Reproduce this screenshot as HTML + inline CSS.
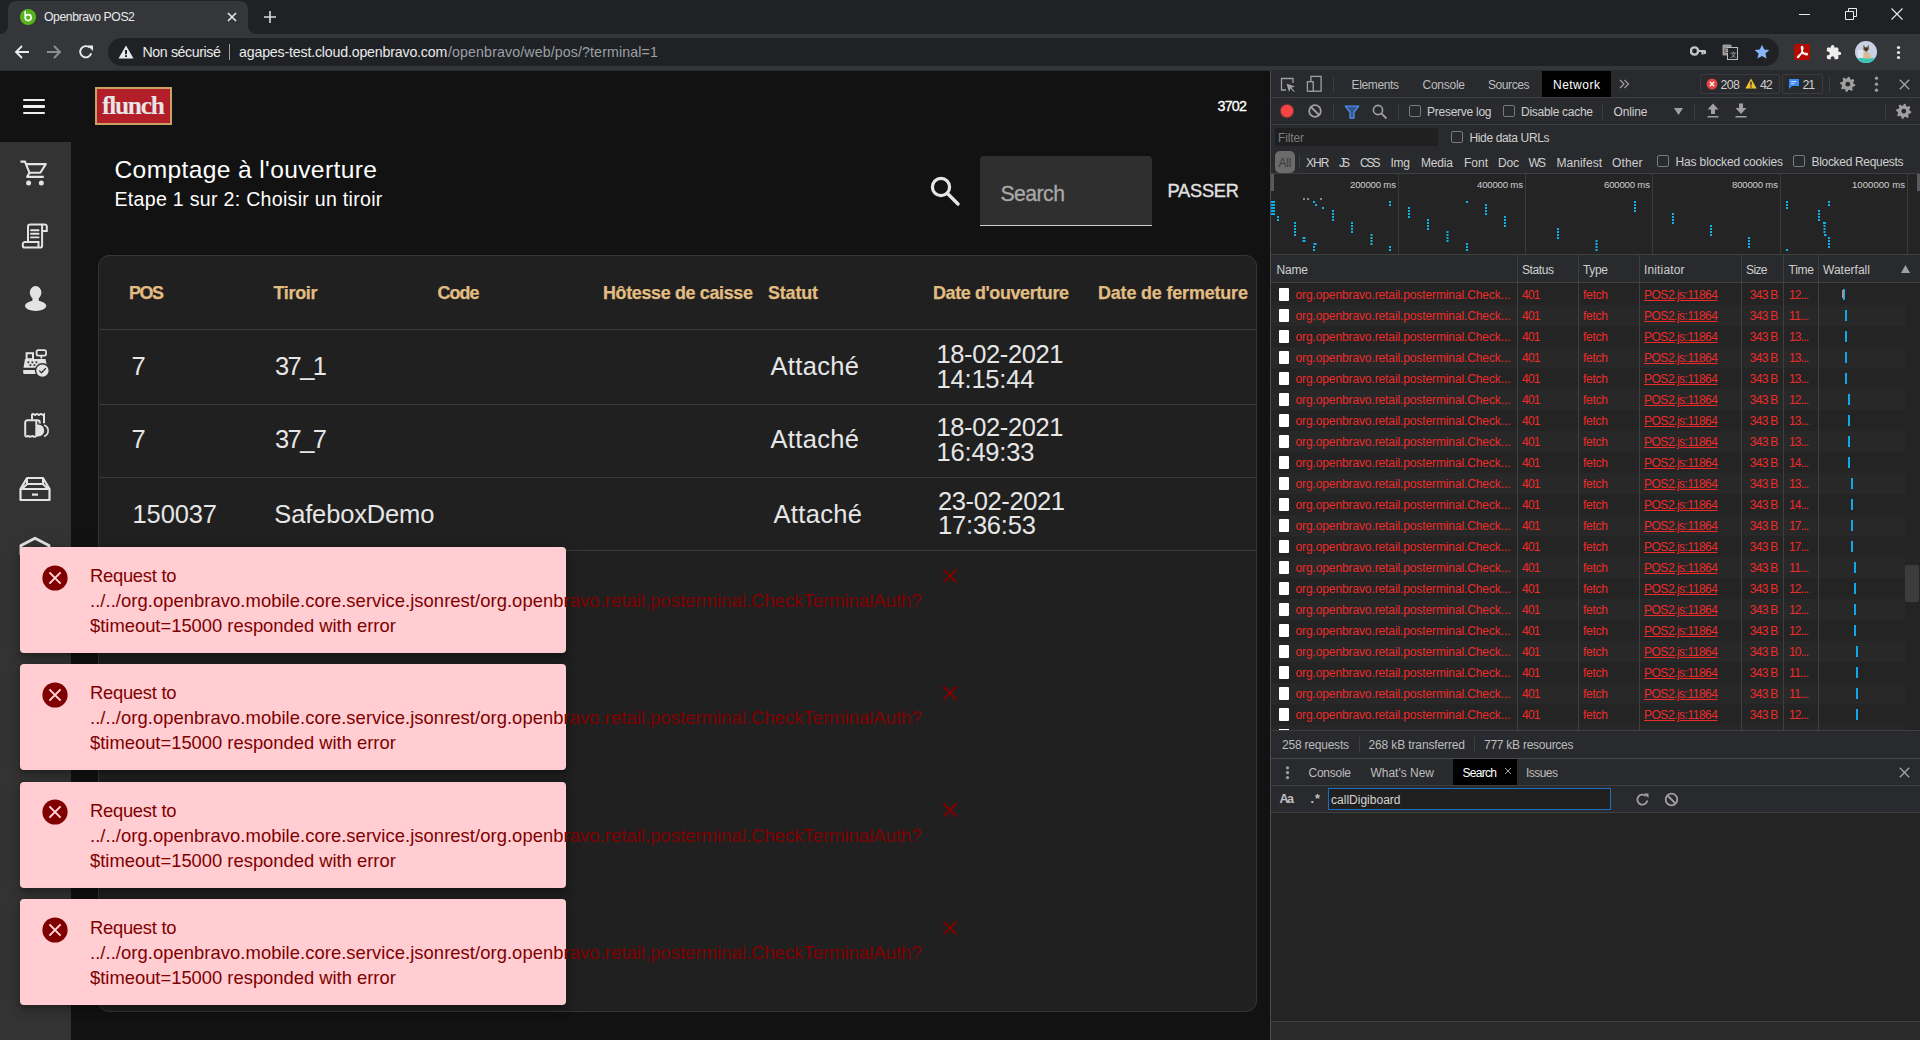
<!DOCTYPE html>
<html><head><meta charset="utf-8"><title>Openbravo POS2</title>
<style>
html,body{margin:0;padding:0;width:1920px;height:1040px;overflow:hidden;background:#202124;}
body{position:relative;font-family:"Liberation Sans",sans-serif;}
.r{position:absolute;display:block;}
.t{position:absolute;white-space:pre;}
</style></head><body>
<div class="r" style="left:0px;top:0px;width:1920px;height:35px;background:#35363a;"></div>
<div class="r" style="left:0px;top:0px;width:8px;height:34px;background:#202124;border-bottom-right-radius:8px;"></div>
<div class="r" style="left:248px;top:0px;width:1672px;height:34px;background:#202124;border-bottom-left-radius:8px;"></div>
<div class="r" style="left:8px;top:0px;width:240px;height:12px;background:#202124;"></div>
<div class="r" style="left:8px;top:1px;width:240px;height:34px;background:#35363a;border-radius:8px 8px 0 0;"></div>
<svg class="r" style="left:20px;top:9px;" width="16" height="16" viewBox="0 0 16 16"><circle cx="8" cy="8" r="8" fill="#56b41b"/><path d="M5.2 2.6 V8.6 A3 3 0 1 0 8.2 5.6 A3 3 0 0 0 5.6 7.2" fill="none" stroke="#fff" stroke-width="1.6" stroke-linecap="round"/></svg>
<div class="t " style="left:44.00px;top:11.17px;font-size:12.20px;line-height:12.20px;color:#e8eaed;letter-spacing:-0.409px;">Openbravo POS2</div>
<svg class="r" style="left:227px;top:12px;" width="10" height="10" viewBox="0 0 10 10"><path d="M1 1L9 9M9 1L1 9" stroke="#e8eaed" stroke-width="1.6"/></svg>
<svg class="r" style="left:264px;top:11px;" width="12" height="12" viewBox="0 0 12 12"><path d="M6 0V12M0 6H12" stroke="#dadce0" stroke-width="1.6"/></svg>
<svg class="r" style="left:1799px;top:13px;" width="12" height="3" viewBox="0 0 12 3"><path d="M0 1.5H11" stroke="#e8eaed" stroke-width="1"/></svg>
<svg class="r" style="left:1845px;top:8px;" width="12" height="12" viewBox="0 0 12 12"><path d="M0.5 3.5H8.5V11.5H0.5Z M3.5 3.5V0.5H11.5V8.5H8.5" fill="none" stroke="#e8eaed" stroke-width="1"/></svg>
<svg class="r" style="left:1891px;top:8px;" width="12" height="12" viewBox="0 0 12 12"><path d="M0.5 0.5L11.5 11.5M11.5 0.5L0.5 11.5" stroke="#e8eaed" stroke-width="1.1"/></svg>
<div class="r" style="left:0px;top:34px;width:1920px;height:37px;background:#35363a;"></div>
<div class="r" style="left:0px;top:70px;width:1920px;height:1px;background:#2a2b2e;"></div>
<svg class="r" style="left:14px;top:44px;" width="16" height="16" viewBox="0 0 16 16"><path d="M15 8H2.5M8 2L2 8L8 14" fill="none" stroke="#e8eaed" stroke-width="1.9"/></svg>
<svg class="r" style="left:46px;top:44px;" width="16" height="16" viewBox="0 0 16 16"><path d="M1 8H13.5M8 2L14 8L8 14" fill="none" stroke="#8d8e91" stroke-width="1.9"/></svg>
<svg class="r" style="left:78px;top:44px;" width="16" height="16" viewBox="0 0 16 16"><path d="M13.2 9.2A5.6 5.6 0 1 1 11.6 3.6" fill="none" stroke="#e8eaed" stroke-width="1.9"/><path d="M9.5 1.5H15V7Z" fill="#e8eaed"/></svg>
<div class="r" style="left:108px;top:38px;width:1671px;height:28px;background:#202124;border-radius:14px;"></div>
<svg class="r" style="left:118px;top:45px;" width="16" height="14" viewBox="0 0 16 14"><path d="M8 0.5L15.5 13.5H0.5Z" fill="#e8eaed"/><rect x="7" y="5" width="2" height="4.2" fill="#202124"/><rect x="7" y="10.2" width="2" height="1.8" fill="#202124"/></svg>
<div class="t " style="left:142.50px;top:44.98px;font-size:14.20px;line-height:14.20px;color:#e8eaed;letter-spacing:-0.396px;">Non sécurisé</div>
<div class="r" style="left:229px;top:44px;width:1px;height:16px;background:#9aa0a6;"></div>
<div class="t " style="left:239.00px;top:44.98px;font-size:14.20px;line-height:14.20px;color:#e8eaed;letter-spacing:-0.181px;">agapes-test.cloud.openbravo.com</div>
<div class="t " style="left:448.00px;top:44.98px;font-size:14.20px;line-height:14.20px;color:#9aa0a6;letter-spacing:0.122px;">/openbravo/web/pos/?terminal=1</div>
<svg class="r" style="left:1690px;top:45px;" width="16" height="12" viewBox="0 0 16 12"><circle cx="4.5" cy="6" r="3.6" fill="none" stroke="#c4c7c5" stroke-width="2.4"/><path d="M8 6H15.5M12.5 6V9.5M15 6V9" stroke="#c4c7c5" stroke-width="2.2"/></svg>
<svg class="r" style="left:1722px;top:44px;" width="16" height="16" viewBox="0 0 16 16"><rect x="0.5" y="0.5" width="9" height="11" fill="#9a9a9a" rx="1"/><rect x="5.5" y="3.5" width="10" height="12" fill="#202124" stroke="#bdbdbd" stroke-width="1"/><text x="2" y="9" font-size="7" fill="#333" font-family="Liberation Sans">G</text><text x="8" y="13" font-size="7" fill="#bbb" font-family="Liberation Sans">文</text></svg>
<svg class="r" style="left:1754px;top:44px;" width="16" height="16" viewBox="0 0 16 16"><path d="M8 0.8L10.2 5.6L15.3 6.1L11.4 9.5L12.6 14.6L8 11.9L3.4 14.6L4.6 9.5L0.7 6.1L5.8 5.6Z" fill="#8ab4f8"/></svg>
<svg class="r" style="left:1794px;top:44px;" width="16" height="16" viewBox="0 0 16 16"><rect width="16" height="16" rx="2" fill="#b30b00"/><path d="M8 2.5C7 2.5 7.3 5 8.5 7.5C9.6 9.8 11.5 11.2 13 10.8C14.3 10.4 13 9.2 10.8 9.2C8.6 9.2 5.8 10.2 4 12.2C2.8 13.6 3.8 14.2 5 12.8C6.5 11 7.6 8.6 8.5 6.2C9.2 4.2 9 2.5 8 2.5Z" fill="none" stroke="#fff" stroke-width="1.3"/></svg>
<svg class="r" style="left:1825px;top:43px;" width="18" height="18" viewBox="0 0 18 18"><g transform="translate(0.5,1.2) scale(0.68)"><path d="M20.5 11H19V7c0-1.1-.9-2-2-2h-4V3.5C13 2.12 11.88 1 10.5 1S8 2.12 8 3.5V5H4c-1.1 0-1.99.9-1.99 2v3.8H3.5c1.49 0 2.7 1.21 2.7 2.7s-1.21 2.7-2.7 2.7H2V20c0 1.1.9 2 2 2h3.8v-1.5c0-1.49 1.21-2.7 2.7-2.7 1.49 0 2.7 1.21 2.7 2.7V22H17c1.1 0 2-.9 2-2v-4h1.5c1.38 0 2.5-1.12 2.5-2.5S21.88 11 20.5 11z" fill="#eeeeee"/></g></svg>
<svg class="r" style="left:1855px;top:41px;" width="22" height="22" viewBox="0 0 22 22"><defs><clipPath id="av"><circle cx="11" cy="11" r="11"/></clipPath></defs><g clip-path="url(#av)"><rect width="22" height="22" fill="#c8d2e4"/><rect x="3" y="9" width="5" height="8" fill="#dfe4ee"/><rect y="17" width="22" height="5" fill="#3cc4b6"/><path d="M9.2 11L8 17.5H16.5L15.5 14L13 11Z" fill="#d8bc92"/><path d="M8.6 3.6L10 6.2H12.2L13.6 3.6L13.8 8.6L11.1 11L8.4 8.6Z" fill="#5a4332"/><path d="M10 7.5H12.2L11.1 9.6Z" fill="#2a1f18"/></g></svg>
<svg class="r" style="left:1896px;top:45px;" width="5" height="15" viewBox="0 0 5 15"><circle cx="2.5" cy="2.5" r="1.6" fill="#e8eaed"/><circle cx="2.5" cy="7.5" r="1.6" fill="#e8eaed"/><circle cx="2.5" cy="12.5" r="1.6" fill="#e8eaed"/></svg>
<div class="r" style="left:0px;top:71px;width:1270px;height:969px;background:#121212;"></div>
<div class="r" style="left:23px;top:98.5px;width:22px;height:2.6px;background:#eeeeee;border-radius:1px;"></div>
<div class="r" style="left:23px;top:105px;width:22px;height:2.6px;background:#eeeeee;border-radius:1px;"></div>
<div class="r" style="left:23px;top:111.5px;width:22px;height:2.6px;background:#eeeeee;border-radius:1px;"></div>
<div class="r" style="left:95px;top:87px;width:77px;height:38px;background:#c9a163;"></div>
<div class="r" style="left:97px;top:89px;width:73px;height:34px;background:#b21f28;"></div>
<div class="t " style="left:102.00px;top:93.14px;font-size:25.50px;line-height:25.50px;color:#e6e6e6;font-weight:bold;letter-spacing:-1.297px;font-family:'Liberation Serif',serif;">flunch</div>
<div class="t " style="left:1217.50px;top:98.90px;font-size:14.30px;line-height:14.30px;color:#ffffff;letter-spacing:-0.772px;-webkit-text-stroke:0.3px #fff;">3702</div>
<div class="r" style="left:0px;top:142px;width:71px;height:898px;background:#333333;"></div>
<svg class="r" style="left:19px;top:159px;" width="30" height="28" viewBox="0 0 30 28"><path d="M1.5 2.6H6L10.5 13.8L8.1 17.9H24.8" fill="none" stroke="#e3e3e3" stroke-width="2.1" stroke-linejoin="round"/><path d="M7.6 5.1H26.8L21.3 13.8H10.5" fill="none" stroke="#e3e3e3" stroke-width="2.1" stroke-linejoin="round"/><circle cx="9.6" cy="24" r="2.5" fill="#e3e3e3"/><circle cx="22.3" cy="24" r="2.5" fill="#e3e3e3"/></svg>
<svg class="r" style="left:20px;top:221px;" width="30" height="30" viewBox="0 0 30 30"><path d="M8 21V5.6A2.2 2.2 0 0 1 10.2 3.4H24.6A2.2 2.2 0 0 1 26.8 5.6V10H22.1" fill="none" stroke="#e3e3e3" stroke-width="2"/><path d="M22.1 3.6V24.4A2.2 2.2 0 0 1 19.9 26.6H5A2.2 2.2 0 0 1 2.8 24.4V23.2A2.2 2.2 0 0 1 5 21H18.5V26" fill="none" stroke="#e3e3e3" stroke-width="2"/><path d="M11 9.2H18.6M11 12.8H18.6M11 16.4H18.6" stroke="#e3e3e3" stroke-width="1.9" stroke-linecap="round"/></svg>
<svg class="r" style="left:22px;top:284px;" width="28" height="28" viewBox="0 0 28 28"><ellipse cx="13.6" cy="8.6" rx="5.8" ry="6.5" fill="#e3e3e3"/><path d="M10.8 12.5H16.4L17 17.2H10.2Z" fill="#e3e3e3"/><ellipse cx="13.6" cy="21.8" rx="10.7" ry="5.1" fill="#e3e3e3"/></svg>
<svg class="r" style="left:21px;top:348px;" width="30" height="30" viewBox="0 0 30 30"><rect x="15.6" y="2.2" width="9.4" height="5.4" rx="1.6" fill="none" stroke="#e3e3e3" stroke-width="1.8"/><path d="M20.3 7.5V10.5" stroke="#e3e3e3" stroke-width="1.8"/><rect x="5.6" y="5.2" width="6.4" height="6" fill="none" stroke="#e3e3e3" stroke-width="2"/><path d="M4 11H24.5L26 18.5L21 19.8H2.5Z" fill="#e3e3e3"/><path d="M2.2 22H19.5V26H3.5A1.3 1.3 0 0 1 2.2 24.7Z" fill="#e3e3e3"/><g fill="#333"><rect x="6.5" y="13.4" width="1.8" height="1.8"/><rect x="10.5" y="13.4" width="1.8" height="1.8"/><rect x="14.5" y="13.4" width="1.8" height="1.8"/><rect x="8.5" y="16.2" width="1.8" height="1.8"/><rect x="12.5" y="16.2" width="1.8" height="1.8"/></g><circle cx="21.4" cy="22.6" r="6.9" fill="#e3e3e3" stroke="#333" stroke-width="1.4"/><path d="M18.2 22.6L20.5 24.8L24.8 20.2" fill="none" stroke="#333" stroke-width="1.3"/></svg>
<svg class="r" style="left:21px;top:411px;" width="30" height="30" viewBox="0 0 30 30"><path d="M11 8.6V3.6Q12 2.4 13 3.4T15 3.4T17 3.4T19 3.4T21 3.4T23 3.6V12.2" fill="none" stroke="#e3e3e3" stroke-width="2"/><path d="M4.2 24.8V11.4A2.2 2.2 0 0 1 6.4 9.2H16.6A2.2 2.2 0 0 1 18.8 11.4V12.6" fill="none" stroke="#e3e3e3" stroke-width="2"/><path d="M15.3 9.5V25.4" stroke="#e3e3e3" stroke-width="2"/><path d="M4.2 24.6Q5 26 6.2 25.4T8.2 25.4T10.2 25.4T12.2 25.4T14.2 25.4H15.4" fill="none" stroke="#e3e3e3" stroke-width="2"/><path d="M15.3 13.6H17.2A5.9 5.9 0 0 1 17.2 25.6H15.3Z" fill="#e3e3e3"/><path d="M23.2 14A7.2 6.4 0 0 1 23.2 25.4" fill="none" stroke="#e3e3e3" stroke-width="1.6"/></svg>
<svg class="r" style="left:19px;top:475px;" width="32" height="28" viewBox="0 0 32 28"><path d="M8 3H24L30.5 14V25H1.5V14Z" fill="none" stroke="#e3e3e3" stroke-width="2.2" stroke-linejoin="round"/><path d="M8 3V9H24V3M1.5 14H30.5M8 9L3 14M24 9L29 14" fill="none" stroke="#e3e3e3" stroke-width="2"/><rect x="13" y="18.5" width="6" height="2.2" fill="#e3e3e3"/></svg>
<svg class="r" style="left:19px;top:535px;" width="32" height="20" viewBox="0 0 32 20"><path d="M2 20V10.5L16 3.2L30 10.5V20" fill="none" stroke="#e3e3e3" stroke-width="2.9" stroke-linejoin="round"/></svg>
<div class="t " style="left:114.50px;top:157.98px;font-size:24.60px;line-height:24.60px;color:#ffffff;letter-spacing:0.358px;">Comptage à l&#x27;ouverture</div>
<div class="t " style="left:114.50px;top:189.61px;font-size:19.60px;line-height:19.60px;color:#ffffff;letter-spacing:0.280px;">Etape 1 sur 2: Choisir un tiroir</div>
<svg class="r" style="left:928px;top:174px;" width="34" height="34" viewBox="0 0 34 34"><circle cx="13" cy="13" r="8.6" fill="none" stroke="#e6e6e6" stroke-width="3.2"/><path d="M19.5 19.5L30 30" stroke="#e6e6e6" stroke-width="3.4" stroke-linecap="round"/></svg>
<div class="r" style="left:980px;top:156px;width:172px;height:70px;background:#2f2f2f;border-radius:4px 4px 0 0;"></div>
<div class="r" style="left:980px;top:225px;width:172px;height:1.3px;background:#cdcdcd;"></div>
<div class="t " style="left:1000.50px;top:183.45px;font-size:21.20px;line-height:21.20px;color:#a8a8a8;letter-spacing:-0.541px;-webkit-text-stroke:0.3px #a8a8a8;">Search</div>
<div class="t " style="left:1167.50px;top:182.19px;font-size:18.20px;line-height:18.20px;color:#e2e2e2;letter-spacing:-0.205px;-webkit-text-stroke:0.35px #e2e2e2;">PASSER</div>
<div class="r" style="left:98px;top:255px;width:1159px;height:757px;background:#202020;border:1px solid #353535;border-radius:11px;box-sizing:border-box;"></div>
<div class="t " style="left:129.00px;top:284.65px;font-size:17.90px;line-height:17.90px;color:#e1bd82;font-weight:bold;letter-spacing:-1.384px;-webkit-text-stroke:0.25px #e1bd82;">POS</div>
<div class="t " style="left:273.50px;top:284.65px;font-size:17.90px;line-height:17.90px;color:#e1bd82;font-weight:bold;letter-spacing:-0.293px;-webkit-text-stroke:0.25px #e1bd82;">Tiroir</div>
<div class="t " style="left:437.50px;top:284.65px;font-size:17.90px;line-height:17.90px;color:#e1bd82;font-weight:bold;letter-spacing:-0.917px;-webkit-text-stroke:0.25px #e1bd82;">Code</div>
<div class="t " style="left:603.00px;top:284.65px;font-size:17.90px;line-height:17.90px;color:#e1bd82;font-weight:bold;letter-spacing:-0.325px;-webkit-text-stroke:0.25px #e1bd82;">Hôtesse de caisse</div>
<div class="t " style="left:768.00px;top:284.65px;font-size:17.90px;line-height:17.90px;color:#e1bd82;font-weight:bold;letter-spacing:-0.149px;-webkit-text-stroke:0.25px #e1bd82;">Statut</div>
<div class="t " style="left:933.00px;top:284.65px;font-size:17.90px;line-height:17.90px;color:#e1bd82;font-weight:bold;letter-spacing:-0.367px;-webkit-text-stroke:0.25px #e1bd82;">Date d&#x27;ouverture</div>
<div class="t " style="left:1098.00px;top:284.65px;font-size:17.90px;line-height:17.90px;color:#e1bd82;font-weight:bold;letter-spacing:-0.140px;-webkit-text-stroke:0.25px #e1bd82;">Date de fermeture</div>
<div class="r" style="left:100px;top:329px;width:1156px;height:1px;background:#3b3b3b;"></div>
<div class="r" style="left:100px;top:404px;width:1156px;height:1px;background:#3b3b3b;"></div>
<div class="r" style="left:100px;top:477px;width:1156px;height:1px;background:#3b3b3b;"></div>
<div class="r" style="left:100px;top:550px;width:1156px;height:1px;background:#3b3b3b;"></div>
<div class="t " style="left:131.50px;top:354.21px;font-size:25.50px;line-height:25.50px;color:#e6e6e6;letter-spacing:-2.152px;">7</div>
<div class="t " style="left:275.00px;top:354.21px;font-size:25.50px;line-height:25.50px;color:#e6e6e6;letter-spacing:-1.579px;">37_1</div>
<div class="t " style="left:770.50px;top:354.21px;font-size:25.50px;line-height:25.50px;color:#e6e6e6;letter-spacing:0.343px;">Attaché</div>
<div class="t " style="left:936.50px;top:341.91px;font-size:25.50px;line-height:25.50px;color:#e6e6e6;letter-spacing:-0.381px;">18-02-2021</div>
<div class="t " style="left:936.50px;top:366.61px;font-size:25.50px;line-height:25.50px;color:#e6e6e6;letter-spacing:-0.189px;">14:15:44</div>
<div class="t " style="left:131.50px;top:427.21px;font-size:25.50px;line-height:25.50px;color:#e6e6e6;letter-spacing:-2.152px;">7</div>
<div class="t " style="left:275.00px;top:427.21px;font-size:25.50px;line-height:25.50px;color:#e6e6e6;letter-spacing:-1.579px;">37_7</div>
<div class="t " style="left:770.50px;top:427.21px;font-size:25.50px;line-height:25.50px;color:#e6e6e6;letter-spacing:0.343px;">Attaché</div>
<div class="t " style="left:936.50px;top:414.91px;font-size:25.50px;line-height:25.50px;color:#e6e6e6;letter-spacing:-0.381px;">18-02-2021</div>
<div class="t " style="left:936.50px;top:439.61px;font-size:25.50px;line-height:25.50px;color:#e6e6e6;letter-spacing:-0.189px;">16:49:33</div>
<div class="t " style="left:132.50px;top:501.61px;font-size:25.50px;line-height:25.50px;color:#e6e6e6;letter-spacing:-0.109px;">150037</div>
<div class="t " style="left:274.30px;top:501.61px;font-size:25.50px;line-height:25.50px;color:#e6e6e6;letter-spacing:-0.154px;">SafeboxDemo</div>
<div class="t " style="left:773.50px;top:501.61px;font-size:25.50px;line-height:25.50px;color:#e6e6e6;letter-spacing:0.343px;">Attaché</div>
<div class="t " style="left:938.00px;top:488.51px;font-size:25.50px;line-height:25.50px;color:#e6e6e6;letter-spacing:-0.381px;">23-02-2021</div>
<div class="t " style="left:938.00px;top:513.01px;font-size:25.50px;line-height:25.50px;color:#e6e6e6;letter-spacing:-0.189px;">17:36:53</div>
<div class="r" style="left:20px;top:547.0px;width:546px;height:106px;background:#ffcdd2;border-radius:4px;box-shadow:0 3px 5px -1px rgba(0,0,0,.2),0 6px 10px 0 rgba(0,0,0,.14),0 1px 18px 0 rgba(0,0,0,.12);"></div>
<svg class="r" style="left:42px;top:565px;" width="26" height="26" viewBox="0 0 26 26"><circle cx="13" cy="13" r="12.6" fill="#800000"/><path d="M7.4 7.4L18.6 18.6M18.6 7.4L7.4 18.6" stroke="#ffd6da" stroke-width="2"/></svg>
<div class="t " style="left:90.00px;top:567.02px;font-size:18.40px;line-height:18.40px;color:#800000;letter-spacing:-0.274px;">Request to</div>
<div class="t " style="left:90.00px;top:592.02px;font-size:18.40px;line-height:18.40px;color:#800000;letter-spacing:0.057px;">../../org.openbravo.mobile.core.service.jsonrest/org.openbravo.retail.posterminal.CheckTerminalAuth?</div>
<div class="t " style="left:90.00px;top:617.02px;font-size:18.40px;line-height:18.40px;color:#800000;letter-spacing:-0.011px;">$timeout=15000 responded with error</div>
<svg class="r" style="left:942px;top:568px;" width="16" height="16" viewBox="0 0 16 16"><path d="M1.5 1.5L14.5 14.5M14.5 1.5L1.5 14.5" stroke="#800000" stroke-width="2"/></svg>
<div class="r" style="left:20px;top:664.4px;width:546px;height:106px;background:#ffcdd2;border-radius:4px;box-shadow:0 3px 5px -1px rgba(0,0,0,.2),0 6px 10px 0 rgba(0,0,0,.14),0 1px 18px 0 rgba(0,0,0,.12);"></div>
<svg class="r" style="left:42px;top:682px;" width="26" height="26" viewBox="0 0 26 26"><circle cx="13" cy="13" r="12.6" fill="#800000"/><path d="M7.4 7.4L18.6 18.6M18.6 7.4L7.4 18.6" stroke="#ffd6da" stroke-width="2"/></svg>
<div class="t " style="left:90.00px;top:684.42px;font-size:18.40px;line-height:18.40px;color:#800000;letter-spacing:-0.274px;">Request to</div>
<div class="t " style="left:90.00px;top:709.42px;font-size:18.40px;line-height:18.40px;color:#800000;letter-spacing:0.057px;">../../org.openbravo.mobile.core.service.jsonrest/org.openbravo.retail.posterminal.CheckTerminalAuth?</div>
<div class="t " style="left:90.00px;top:734.42px;font-size:18.40px;line-height:18.40px;color:#800000;letter-spacing:-0.011px;">$timeout=15000 responded with error</div>
<svg class="r" style="left:942px;top:685px;" width="16" height="16" viewBox="0 0 16 16"><path d="M1.5 1.5L14.5 14.5M14.5 1.5L1.5 14.5" stroke="#800000" stroke-width="2"/></svg>
<div class="r" style="left:20px;top:781.8px;width:546px;height:106px;background:#ffcdd2;border-radius:4px;box-shadow:0 3px 5px -1px rgba(0,0,0,.2),0 6px 10px 0 rgba(0,0,0,.14),0 1px 18px 0 rgba(0,0,0,.12);"></div>
<svg class="r" style="left:42px;top:799px;" width="26" height="26" viewBox="0 0 26 26"><circle cx="13" cy="13" r="12.6" fill="#800000"/><path d="M7.4 7.4L18.6 18.6M18.6 7.4L7.4 18.6" stroke="#ffd6da" stroke-width="2"/></svg>
<div class="t " style="left:90.00px;top:801.82px;font-size:18.40px;line-height:18.40px;color:#800000;letter-spacing:-0.274px;">Request to</div>
<div class="t " style="left:90.00px;top:826.82px;font-size:18.40px;line-height:18.40px;color:#800000;letter-spacing:0.057px;">../../org.openbravo.mobile.core.service.jsonrest/org.openbravo.retail.posterminal.CheckTerminalAuth?</div>
<div class="t " style="left:90.00px;top:851.82px;font-size:18.40px;line-height:18.40px;color:#800000;letter-spacing:-0.011px;">$timeout=15000 responded with error</div>
<svg class="r" style="left:942px;top:802px;" width="16" height="16" viewBox="0 0 16 16"><path d="M1.5 1.5L14.5 14.5M14.5 1.5L1.5 14.5" stroke="#800000" stroke-width="2"/></svg>
<div class="r" style="left:20px;top:899.2px;width:546px;height:106px;background:#ffcdd2;border-radius:4px;box-shadow:0 3px 5px -1px rgba(0,0,0,.2),0 6px 10px 0 rgba(0,0,0,.14),0 1px 18px 0 rgba(0,0,0,.12);"></div>
<svg class="r" style="left:42px;top:917px;" width="26" height="26" viewBox="0 0 26 26"><circle cx="13" cy="13" r="12.6" fill="#800000"/><path d="M7.4 7.4L18.6 18.6M18.6 7.4L7.4 18.6" stroke="#ffd6da" stroke-width="2"/></svg>
<div class="t " style="left:90.00px;top:919.22px;font-size:18.40px;line-height:18.40px;color:#800000;letter-spacing:-0.274px;">Request to</div>
<div class="t " style="left:90.00px;top:944.22px;font-size:18.40px;line-height:18.40px;color:#800000;letter-spacing:0.057px;">../../org.openbravo.mobile.core.service.jsonrest/org.openbravo.retail.posterminal.CheckTerminalAuth?</div>
<div class="t " style="left:90.00px;top:969.22px;font-size:18.40px;line-height:18.40px;color:#800000;letter-spacing:-0.011px;">$timeout=15000 responded with error</div>
<svg class="r" style="left:942px;top:920px;" width="16" height="16" viewBox="0 0 16 16"><path d="M1.5 1.5L14.5 14.5M14.5 1.5L1.5 14.5" stroke="#800000" stroke-width="2"/></svg>
<div class="r" style="left:1270px;top:71px;width:1px;height:969px;background:#4b4b4b;"></div>
<div class="r" style="left:1271px;top:71px;width:649px;height:969px;background:#242424;"></div>
<div class="r" style="left:1271px;top:71px;width:649px;height:26px;background:#292a2d;"></div>
<div class="r" style="left:1271px;top:97px;width:649px;height:1px;background:#3f3f3f;"></div>
<svg class="r" style="left:1280px;top:77px;" width="16" height="16" viewBox="0 0 16 16"><path d="M6 13H1.5V1.5H13V6" fill="none" stroke="#a0a0a0" stroke-width="1.3"/><path d="M6.5 6.5L15 9.5L11.3 10.8L14.8 14.3L14 15L10.5 11.5L9 15Z" fill="#a0a0a0"/></svg>
<svg class="r" style="left:1306px;top:75px;" width="17" height="20" viewBox="0 0 17 20"><rect x="4.9" y="1.4" width="10.2" height="14.8" fill="none" stroke="#a0a0a0" stroke-width="1.3"/><rect x="1.4" y="6.7" width="5.8" height="9.5" fill="#292a2d" stroke="#a0a0a0" stroke-width="1.3"/></svg>
<div class="r" style="left:1333px;top:77px;width:1px;height:15px;background:#3f3f3f;"></div>
<div class="t " style="left:1351.50px;top:78.84px;font-size:12.00px;line-height:12.00px;color:#bdbdbd;letter-spacing:-0.363px;">Elements</div>
<div class="t " style="left:1422.50px;top:78.84px;font-size:12.00px;line-height:12.00px;color:#bdbdbd;letter-spacing:-0.257px;">Console</div>
<div class="t " style="left:1488.00px;top:78.84px;font-size:12.00px;line-height:12.00px;color:#bdbdbd;letter-spacing:-0.423px;">Sources</div>
<div class="r" style="left:1542px;top:71px;width:69px;height:26px;background:#000000;"></div>
<div class="t " style="left:1553.00px;top:78.84px;font-size:12.00px;line-height:12.00px;color:#ffffff;letter-spacing:0.483px;">Network</div>
<svg class="r" style="left:1619px;top:79px;" width="11" height="10" viewBox="0 0 11 10"><path d="M1 1L5 5L1 9M5.5 1L9.5 5L5.5 9" fill="none" stroke="#a0a0a0" stroke-width="1.2"/></svg>
<div class="r" style="left:1700px;top:74px;width:80px;height:20px;background:transparent;border:1px solid #3a3b3e;border-radius:2px;box-sizing:border-box;"></div>
<svg class="r" style="left:1706px;top:78px;" width="12" height="12" viewBox="0 0 12 12"><circle cx="6" cy="6" r="5.5" fill="#e34343"/><path d="M3.8 3.8L8.2 8.2M8.2 3.8L3.8 8.2" stroke="#fff" stroke-width="1.3"/></svg>
<div class="t " style="left:1720.50px;top:78.50px;font-size:12.40px;line-height:12.40px;color:#cfcfcf;letter-spacing:-0.604px;">208</div>
<svg class="r" style="left:1745px;top:78px;" width="12" height="11" viewBox="0 0 12 11"><path d="M6 0.5L11.7 10.5H0.3Z" fill="#f2c22e"/><rect x="5.3" y="3.6" width="1.4" height="3.8" fill="#292a2d"/><rect x="5.3" y="8.2" width="1.4" height="1.3" fill="#292a2d"/></svg>
<div class="t " style="left:1760.00px;top:78.50px;font-size:12.40px;line-height:12.40px;color:#cfcfcf;letter-spacing:-1.264px;">42</div>
<div class="r" style="left:1782px;top:74px;width:41px;height:20px;background:transparent;border:1px solid #3a3b3e;border-radius:2px;box-sizing:border-box;"></div>
<svg class="r" style="left:1788px;top:78px;" width="12" height="12" viewBox="0 0 12 12"><path d="M1 1H11V8H4L1 11Z" fill="#3b8cf2"/><path d="M3 3.6H8.5M3 5.8H6.5" stroke="#e0e8ff" stroke-width="0.9"/></svg>
<div class="t " style="left:1802.50px;top:78.50px;font-size:12.40px;line-height:12.40px;color:#cfcfcf;letter-spacing:-1.264px;">21</div>
<div class="r" style="left:1829px;top:77px;width:1px;height:15px;background:#3f3f3f;"></div>
<svg class="r" style="left:1840px;top:76px;" width="16" height="17" viewBox="0 0 16 17"><path d="M8 0.8L9.6 1L10 3A5.2 5.2 0 0 1 11.4 3.8L13.3 3.1L14.4 4.5L13.2 6.1A5.2 5.2 0 0 1 13.5 7.7L15.3 8.6L15 10.3L13 10.6A5.2 5.2 0 0 1 12.1 12L12.8 13.9L11.4 15L9.8 13.8A5.2 5.2 0 0 1 8.2 14.1L7.3 15.9L5.6 15.6L5.3 13.6A5.2 5.2 0 0 1 3.9 12.7L2 13.4L1 12L2.2 10.4A5.2 5.2 0 0 1 1.9 8.8L0.1 7.9L0.4 6.2L2.4 5.9A5.2 5.2 0 0 1 3.3 4.5L2.6 2.6L4 1.5L5.6 2.7A5.2 5.2 0 0 1 7.2 2.4Z" fill="#a0a0a0"/><circle cx="7.8" cy="8.2" r="2.4" fill="#292a2d"/></svg>
<svg class="r" style="left:1874px;top:76px;" width="5" height="17" viewBox="0 0 5 17"><circle cx="2.5" cy="2.2" r="1.6" fill="#a0a0a0"/><circle cx="2.5" cy="8.2" r="1.6" fill="#a0a0a0"/><circle cx="2.5" cy="14.2" r="1.6" fill="#a0a0a0"/></svg>
<svg class="r" style="left:1899px;top:79px;" width="11" height="11" viewBox="0 0 11 11"><path d="M0.8 0.8L10.2 10.2M10.2 0.8L0.8 10.2" stroke="#a0a0a0" stroke-width="1.4"/></svg>
<div class="r" style="left:1271px;top:98px;width:649px;height:26px;background:#292a2d;"></div>
<div class="r" style="left:1271px;top:124px;width:649px;height:1px;background:#3f3f3f;"></div>
<svg class="r" style="left:1279px;top:103px;" width="16" height="16" viewBox="0 0 16 16"><circle cx="8" cy="8" r="7.5" fill="rgba(239,68,68,.25)"/><circle cx="8" cy="8" r="6.2" fill="#f44444"/></svg>
<svg class="r" style="left:1308px;top:104px;" width="14" height="14" viewBox="0 0 14 14"><circle cx="7" cy="7" r="5.8" fill="none" stroke="#a0a0a0" stroke-width="1.8"/><path d="M3 3L11 11" stroke="#a0a0a0" stroke-width="1.8"/></svg>
<div class="r" style="left:1333px;top:104px;width:1px;height:15px;background:#3f3f3f;"></div>
<svg class="r" style="left:1344px;top:105px;" width="16" height="14" viewBox="0 0 16 14"><path d="M1.2 1.2H14.8L10 7V12.6A0.6 0.6 0 0 1 9.4 13.2H6.6A0.6 0.6 0 0 1 6 12.6V7Z" fill="#34588c" stroke="#4d8ff0" stroke-width="1.3" stroke-linejoin="round"/></svg>
<svg class="r" style="left:1372px;top:104px;" width="16" height="16" viewBox="0 0 16 16"><circle cx="6" cy="6" r="4.6" fill="none" stroke="#a0a0a0" stroke-width="1.6"/><path d="M9.3 9.3L14.5 14.5" stroke="#a0a0a0" stroke-width="1.8"/></svg>
<div class="r" style="left:1398px;top:104px;width:1px;height:15px;background:#3f3f3f;"></div>
<div class="r" style="left:1409px;top:105px;width:12px;height:12px;background:transparent;border:1px solid #7a7a7a;border-radius:2px;box-sizing:border-box;"></div>
<div class="t " style="left:1427.00px;top:105.84px;font-size:12.00px;line-height:12.00px;color:#cfcfcf;letter-spacing:-0.262px;">Preserve log</div>
<div class="r" style="left:1503px;top:105px;width:12px;height:12px;background:transparent;border:1px solid #7a7a7a;border-radius:2px;box-sizing:border-box;"></div>
<div class="t " style="left:1521.00px;top:105.84px;font-size:12.00px;line-height:12.00px;color:#cfcfcf;letter-spacing:-0.280px;">Disable cache</div>
<div class="r" style="left:1602px;top:104px;width:1px;height:15px;background:#3f3f3f;"></div>
<div class="t " style="left:1613.50px;top:105.84px;font-size:12.00px;line-height:12.00px;color:#cfcfcf;letter-spacing:-0.136px;">Online</div>
<svg class="r" style="left:1674px;top:108px;" width="9" height="7" viewBox="0 0 9 7"><path d="M0 0H9L4.5 7Z" fill="#a0a0a0"/></svg>
<div class="r" style="left:1694px;top:104px;width:1px;height:15px;background:#3f3f3f;"></div>
<svg class="r" style="left:1707px;top:103px;" width="12" height="15" viewBox="0 0 12 15"><path d="M6 0.5L11.5 6.5H8V11H4V6.5H0.5Z M0.5 13H11.5V14.5H0.5Z" fill="#a0a0a0"/></svg>
<svg class="r" style="left:1735px;top:103px;" width="12" height="15" viewBox="0 0 12 15"><path d="M4 0.5H8V5H11.5L6 11L0.5 5H4Z M0.5 13H11.5V14.5H0.5Z" fill="#a0a0a0"/></svg>
<div class="r" style="left:1885px;top:104px;width:1px;height:15px;background:#3f3f3f;"></div>
<svg class="r" style="left:1896px;top:103px;" width="16" height="17" viewBox="0 0 16 17"><path d="M8 0.8L9.6 1L10 3A5.2 5.2 0 0 1 11.4 3.8L13.3 3.1L14.4 4.5L13.2 6.1A5.2 5.2 0 0 1 13.5 7.7L15.3 8.6L15 10.3L13 10.6A5.2 5.2 0 0 1 12.1 12L12.8 13.9L11.4 15L9.8 13.8A5.2 5.2 0 0 1 8.2 14.1L7.3 15.9L5.6 15.6L5.3 13.6A5.2 5.2 0 0 1 3.9 12.7L2 13.4L1 12L2.2 10.4A5.2 5.2 0 0 1 1.9 8.8L0.1 7.9L0.4 6.2L2.4 5.9A5.2 5.2 0 0 1 3.3 4.5L2.6 2.6L4 1.5L5.6 2.7A5.2 5.2 0 0 1 7.2 2.4Z" fill="#a0a0a0"/><circle cx="7.8" cy="8.2" r="2.4" fill="#292a2d"/></svg>
<div class="r" style="left:1271px;top:125px;width:649px;height:48px;background:#292a2d;"></div>
<div class="r" style="left:1271px;top:173px;width:649px;height:1px;background:#3f3f3f;"></div>
<div class="r" style="left:1275px;top:128px;width:163px;height:18px;background:#202020;"></div>
<div class="t " style="left:1278.00px;top:132.34px;font-size:12.00px;line-height:12.00px;color:#7d7d7d;letter-spacing:-0.128px;">Filter</div>
<div class="r" style="left:1451px;top:131px;width:12px;height:12px;background:transparent;border:1px solid #7a7a7a;border-radius:2px;box-sizing:border-box;"></div>
<div class="t " style="left:1469.50px;top:131.84px;font-size:12.00px;line-height:12.00px;color:#cfcfcf;letter-spacing:-0.363px;">Hide data URLs</div>
<div class="r" style="left:1275px;top:151px;width:20px;height:21.5px;background:#6b6b6b;border-radius:5px;"></div>
<div class="t " style="left:1278.50px;top:156.84px;font-size:12.00px;line-height:12.00px;color:#3a3a3a;letter-spacing:-0.160px;">All</div>
<div class="r" style="left:1299px;top:155px;width:1px;height:14px;background:#3f3f3f;"></div>
<div class="t " style="left:1306.00px;top:156.84px;font-size:12.00px;line-height:12.00px;color:#cfcfcf;letter-spacing:-0.910px;">XHR</div>
<div class="t " style="left:1339.00px;top:156.84px;font-size:12.00px;line-height:12.00px;color:#cfcfcf;letter-spacing:-2.980px;">JS</div>
<div class="t " style="left:1360.00px;top:156.84px;font-size:12.00px;line-height:12.00px;color:#cfcfcf;letter-spacing:-2.080px;">CSS</div>
<div class="t " style="left:1390.50px;top:156.84px;font-size:12.00px;line-height:12.00px;color:#cfcfcf;letter-spacing:-0.240px;">Img</div>
<div class="t " style="left:1421.00px;top:156.84px;font-size:12.00px;line-height:12.00px;color:#cfcfcf;letter-spacing:-0.190px;">Media</div>
<div class="t " style="left:1464.00px;top:156.84px;font-size:12.00px;line-height:12.00px;color:#cfcfcf;">Font</div>
<div class="t " style="left:1498.00px;top:156.84px;font-size:12.00px;line-height:12.00px;color:#cfcfcf;letter-spacing:-0.180px;">Doc</div>
<div class="t " style="left:1528.50px;top:156.84px;font-size:12.00px;line-height:12.00px;color:#cfcfcf;letter-spacing:-1.820px;">WS</div>
<div class="t " style="left:1556.50px;top:156.84px;font-size:12.00px;line-height:12.00px;color:#cfcfcf;letter-spacing:0.020px;">Manifest</div>
<div class="t " style="left:1612.00px;top:156.84px;font-size:12.00px;line-height:12.00px;color:#cfcfcf;letter-spacing:0.125px;">Other</div>
<div class="r" style="left:1657px;top:155px;width:12px;height:12px;background:transparent;border:1px solid #7a7a7a;border-radius:2px;box-sizing:border-box;"></div>
<div class="t " style="left:1675.50px;top:155.84px;font-size:12.00px;line-height:12.00px;color:#cfcfcf;letter-spacing:-0.141px;">Has blocked cookies</div>
<div class="r" style="left:1793px;top:155px;width:12px;height:12px;background:transparent;border:1px solid #7a7a7a;border-radius:2px;box-sizing:border-box;"></div>
<div class="t " style="left:1811.50px;top:155.84px;font-size:12.00px;line-height:12.00px;color:#cfcfcf;letter-spacing:-0.315px;">Blocked Requests</div>
<div class="r" style="left:1271px;top:174px;width:649px;height:80px;background:#242424;"></div>
<div class="r" style="left:1271px;top:254px;width:649px;height:1px;background:#3f3f3f;"></div>
<div class="r" style="left:1398px;top:174px;width:1px;height:80px;background:#3a3a3a;"></div>
<div class="r" style="left:1525px;top:174px;width:1px;height:80px;background:#3a3a3a;"></div>
<div class="r" style="left:1652px;top:174px;width:1px;height:80px;background:#3a3a3a;"></div>
<div class="r" style="left:1780px;top:174px;width:1px;height:80px;background:#3a3a3a;"></div>
<div class="r" style="left:1907px;top:174px;width:1px;height:80px;background:#3a3a3a;"></div>
<div class="t " style="left:1350.00px;top:179.87px;font-size:9.60px;line-height:9.60px;color:#cfcfcf;letter-spacing:-0.190px;">200000 ms</div>
<div class="t " style="left:1477.00px;top:179.87px;font-size:9.60px;line-height:9.60px;color:#cfcfcf;letter-spacing:-0.190px;">400000 ms</div>
<div class="t " style="left:1604.00px;top:179.87px;font-size:9.60px;line-height:9.60px;color:#cfcfcf;letter-spacing:-0.190px;">600000 ms</div>
<div class="t " style="left:1732.00px;top:179.87px;font-size:9.60px;line-height:9.60px;color:#cfcfcf;letter-spacing:-0.190px;">800000 ms</div>
<div class="t " style="left:1852.00px;top:179.87px;font-size:9.60px;line-height:9.60px;color:#cfcfcf;letter-spacing:0.017px;">1000000 ms</div>
<div class="r" style="left:1271px;top:174px;width:2.5px;height:17px;background:#5a5a5a;"></div>
<div class="r" style="left:1917px;top:174px;width:3px;height:17px;background:#5a5a5a;"></div>
<svg class="r" style="left:1270px;top:174px;" width="650" height="80" viewBox="0 0 650 80"><rect x="1" y="27" width="4" height="2" fill="#0ab1f0"/><rect x="1" y="30" width="4" height="2" fill="#0ab1f0"/><rect x="1" y="33" width="4" height="2" fill="#0ab1f0"/><rect x="1" y="36" width="4" height="2" fill="#0ab1f0"/><rect x="1" y="39" width="4" height="2" fill="#0ab1f0"/><rect x="7" y="42" width="2" height="2" fill="#12b0e6"/><rect x="7" y="45" width="2" height="2" fill="#12b0e6"/><rect x="24" y="48" width="2" height="2" fill="#12b0e6"/><rect x="24" y="51" width="2" height="2" fill="#12b0e6"/><rect x="24" y="54" width="2" height="2" fill="#12b0e6"/><rect x="24" y="57" width="2" height="2" fill="#12b0e6"/><rect x="24" y="60" width="2" height="2" fill="#12b0e6"/><rect x="32.5" y="63" width="3" height="2" fill="#12b0e6"/><rect x="32.5" y="66" width="3" height="2" fill="#12b0e6"/><rect x="43.5" y="69" width="3" height="2" fill="#12b0e6"/><rect x="43" y="72" width="2" height="2" fill="#12b0e6"/><rect x="43" y="75" width="2" height="2" fill="#12b0e6"/><rect x="33" y="24" width="2" height="2" fill="#8a8a8a"/><rect x="37" y="24" width="2" height="2" fill="#8a8a8a"/><rect x="50" y="24" width="2" height="2" fill="#8a8a8a"/><rect x="43" y="27" width="2" height="2" fill="#12b0e6"/><rect x="45" y="30" width="2" height="2" fill="#12b0e6"/><rect x="52" y="33" width="2" height="2" fill="#12b0e6"/><rect x="62" y="36" width="2" height="2" fill="#12b0e6"/><rect x="62" y="39" width="2" height="2" fill="#12b0e6"/><rect x="62" y="42" width="2" height="2" fill="#12b0e6"/><rect x="62" y="45" width="2" height="2" fill="#12b0e6"/><rect x="81" y="48" width="2" height="2" fill="#12b0e6"/><rect x="81" y="51" width="2" height="2" fill="#12b0e6"/><rect x="81" y="54" width="2" height="2" fill="#12b0e6"/><rect x="81" y="57" width="2" height="2" fill="#12b0e6"/><rect x="100.5" y="60" width="2" height="2" fill="#22b8c8"/><rect x="100.5" y="63" width="2" height="2" fill="#22b8c8"/><rect x="100.5" y="66" width="2" height="2" fill="#22b8c8"/><rect x="100.5" y="69" width="2" height="2" fill="#22b8c8"/><rect x="119" y="27" width="2" height="2" fill="#12b0e6"/><rect x="119" y="30" width="2" height="2" fill="#12b0e6"/><rect x="119" y="72" width="2" height="2" fill="#12b0e6"/><rect x="119" y="75" width="2" height="2" fill="#12b0e6"/><rect x="138" y="33" width="2" height="2" fill="#12b0e6"/><rect x="138" y="36" width="2" height="2" fill="#12b0e6"/><rect x="138" y="39" width="2" height="2" fill="#12b0e6"/><rect x="138" y="42" width="2" height="2" fill="#12b0e6"/><rect x="157" y="45" width="2" height="2" fill="#12b0e6"/><rect x="157" y="48" width="2" height="2" fill="#12b0e6"/><rect x="157" y="51" width="2" height="2" fill="#12b0e6"/><rect x="157" y="54" width="2" height="2" fill="#12b0e6"/><rect x="176.5" y="57" width="2" height="2" fill="#12b0e6"/><rect x="176.5" y="60" width="2" height="2" fill="#12b0e6"/><rect x="176.5" y="63" width="2" height="2" fill="#12b0e6"/><rect x="176.5" y="66" width="2" height="2" fill="#12b0e6"/><rect x="196" y="27" width="2" height="2" fill="#12b0e6"/><rect x="196" y="69" width="2" height="2" fill="#12b0e6"/><rect x="196" y="72" width="2" height="2" fill="#12b0e6"/><rect x="196" y="75" width="2" height="2" fill="#12b0e6"/><rect x="215" y="30" width="2" height="2" fill="#12b0e6"/><rect x="215" y="33" width="2" height="2" fill="#12b0e6"/><rect x="215" y="36" width="2" height="2" fill="#12b0e6"/><rect x="215" y="39" width="2" height="2" fill="#12b0e6"/><rect x="234" y="42" width="2" height="2" fill="#12b0e6"/><rect x="234" y="45" width="2" height="2" fill="#12b0e6"/><rect x="234" y="48" width="2" height="2" fill="#12b0e6"/><rect x="234" y="51" width="2" height="2" fill="#12b0e6"/><rect x="287" y="54" width="2" height="2" fill="#12b0e6"/><rect x="287" y="57" width="2" height="2" fill="#12b0e6"/><rect x="287" y="60" width="2" height="2" fill="#12b0e6"/><rect x="287" y="63" width="2" height="2" fill="#12b0e6"/><rect x="325.5" y="66" width="2" height="2" fill="#12b0e6"/><rect x="325.5" y="69" width="2" height="2" fill="#12b0e6"/><rect x="325.5" y="72" width="2" height="2" fill="#12b0e6"/><rect x="325.5" y="75" width="2" height="2" fill="#12b0e6"/><rect x="364" y="27" width="2" height="2" fill="#12b0e6"/><rect x="364" y="30" width="2" height="2" fill="#12b0e6"/><rect x="364" y="33" width="2" height="2" fill="#12b0e6"/><rect x="364" y="36" width="2" height="2" fill="#12b0e6"/><rect x="402" y="39" width="2" height="2" fill="#12b0e6"/><rect x="402" y="42" width="2" height="2" fill="#12b0e6"/><rect x="402" y="45" width="2" height="2" fill="#12b0e6"/><rect x="402" y="48" width="2" height="2" fill="#12b0e6"/><rect x="440" y="51" width="2" height="2" fill="#12b0e6"/><rect x="440" y="54" width="2" height="2" fill="#12b0e6"/><rect x="440" y="57" width="2" height="2" fill="#12b0e6"/><rect x="440" y="60" width="2" height="2" fill="#12b0e6"/><rect x="478" y="63" width="2" height="2" fill="#12b0e6"/><rect x="478" y="66" width="2" height="2" fill="#12b0e6"/><rect x="478" y="69" width="2" height="2" fill="#12b0e6"/><rect x="478" y="72" width="2" height="2" fill="#12b0e6"/><rect x="516" y="27" width="2" height="2" fill="#12b0e6"/><rect x="516" y="30" width="2" height="2" fill="#12b0e6"/><rect x="516" y="33" width="2" height="2" fill="#12b0e6"/><rect x="516" y="75" width="2" height="2" fill="#12b0e6"/><rect x="548" y="36" width="2" height="2" fill="#12b0e6"/><rect x="548" y="39" width="2" height="2" fill="#12b0e6"/><rect x="548" y="42" width="2" height="2" fill="#12b0e6"/><rect x="548" y="45" width="2" height="2" fill="#12b0e6"/><rect x="553" y="48" width="3" height="2" fill="#12b0e6"/><rect x="553.5" y="51" width="2" height="2" fill="#12b0e6"/><rect x="553.5" y="54" width="2" height="2" fill="#12b0e6"/><rect x="553.5" y="57" width="2" height="2" fill="#12b0e6"/><rect x="554" y="60" width="2.5" height="2" fill="#12b0e6"/><rect x="558" y="27" width="2" height="2" fill="#12b0e6"/><rect x="558" y="30" width="2" height="2" fill="#12b0e6"/><rect x="558" y="63" width="2" height="2" fill="#12b0e6"/><rect x="558" y="66" width="2" height="2" fill="#12b0e6"/><rect x="558" y="69" width="2" height="2" fill="#12b0e6"/><rect x="558" y="72" width="2" height="2" fill="#12b0e6"/></svg>
<div class="r" style="left:1271px;top:255px;width:649px;height:27px;background:#292a2d;"></div>
<div class="r" style="left:1271px;top:282px;width:649px;height:1px;background:#3f3f3f;"></div>
<div class="r" style="left:1517px;top:255px;width:1px;height:27px;background:#3f3f3f;"></div>
<div class="r" style="left:1578px;top:255px;width:1px;height:27px;background:#3f3f3f;"></div>
<div class="r" style="left:1639px;top:255px;width:1px;height:27px;background:#3f3f3f;"></div>
<div class="r" style="left:1741px;top:255px;width:1px;height:27px;background:#3f3f3f;"></div>
<div class="r" style="left:1783px;top:255px;width:1px;height:27px;background:#3f3f3f;"></div>
<div class="r" style="left:1818px;top:255px;width:1px;height:27px;background:#3f3f3f;"></div>
<div class="t " style="left:1276.50px;top:264.14px;font-size:12.00px;line-height:12.00px;color:#cfcfcf;letter-spacing:-0.180px;">Name</div>
<div class="t " style="left:1522.00px;top:264.14px;font-size:12.00px;line-height:12.00px;color:#cfcfcf;letter-spacing:-0.404px;">Status</div>
<div class="t " style="left:1583.00px;top:264.14px;font-size:12.00px;line-height:12.00px;color:#cfcfcf;letter-spacing:-0.347px;">Type</div>
<div class="t " style="left:1644.00px;top:264.14px;font-size:12.00px;line-height:12.00px;color:#cfcfcf;letter-spacing:0.143px;">Initiator</div>
<div class="t " style="left:1746.00px;top:264.14px;font-size:12.00px;line-height:12.00px;color:#cfcfcf;letter-spacing:-0.613px;">Size</div>
<div class="t " style="left:1788.50px;top:264.14px;font-size:12.00px;line-height:12.00px;color:#cfcfcf;letter-spacing:-0.240px;">Time</div>
<div class="t " style="left:1823.00px;top:264.14px;font-size:12.00px;line-height:12.00px;color:#cfcfcf;">Waterfall</div>
<svg class="r" style="left:1901px;top:265px;" width="9" height="8" viewBox="0 0 9 8"><path d="M4.5 0L9 8H0Z" fill="#a0a0a0"/></svg>
<div class="r" style="left:1271px;top:283px;width:634px;height:22px;background:#242424;"></div>
<div class="r" style="left:1271px;top:305px;width:634px;height:21px;background:#282828;"></div>
<div class="r" style="left:1271px;top:326px;width:634px;height:21px;background:#242424;"></div>
<div class="r" style="left:1271px;top:347px;width:634px;height:21px;background:#282828;"></div>
<div class="r" style="left:1271px;top:368px;width:634px;height:21px;background:#242424;"></div>
<div class="r" style="left:1271px;top:389px;width:634px;height:21px;background:#282828;"></div>
<div class="r" style="left:1271px;top:410px;width:634px;height:21px;background:#242424;"></div>
<div class="r" style="left:1271px;top:431px;width:634px;height:21px;background:#282828;"></div>
<div class="r" style="left:1271px;top:452px;width:634px;height:21px;background:#242424;"></div>
<div class="r" style="left:1271px;top:473px;width:634px;height:21px;background:#282828;"></div>
<div class="r" style="left:1271px;top:494px;width:634px;height:21px;background:#242424;"></div>
<div class="r" style="left:1271px;top:515px;width:634px;height:21px;background:#282828;"></div>
<div class="r" style="left:1271px;top:536px;width:634px;height:21px;background:#242424;"></div>
<div class="r" style="left:1271px;top:557px;width:634px;height:21px;background:#282828;"></div>
<div class="r" style="left:1271px;top:578px;width:634px;height:21px;background:#242424;"></div>
<div class="r" style="left:1271px;top:599px;width:634px;height:21px;background:#282828;"></div>
<div class="r" style="left:1271px;top:620px;width:634px;height:21px;background:#242424;"></div>
<div class="r" style="left:1271px;top:641px;width:634px;height:21px;background:#282828;"></div>
<div class="r" style="left:1271px;top:662px;width:634px;height:21px;background:#242424;"></div>
<div class="r" style="left:1271px;top:683px;width:634px;height:21px;background:#282828;"></div>
<div class="r" style="left:1271px;top:704px;width:634px;height:21px;background:#242424;"></div>
<div class="r" style="left:1271px;top:725px;width:634px;height:5px;background:#282828;"></div>
<div class="r" style="left:1517px;top:283px;width:1px;height:447px;background:#3f3f3f;"></div>
<div class="r" style="left:1578px;top:283px;width:1px;height:447px;background:#3f3f3f;"></div>
<div class="r" style="left:1639px;top:283px;width:1px;height:447px;background:#3f3f3f;"></div>
<div class="r" style="left:1741px;top:283px;width:1px;height:447px;background:#3f3f3f;"></div>
<div class="r" style="left:1783px;top:283px;width:1px;height:447px;background:#3f3f3f;"></div>
<div class="r" style="left:1818px;top:283px;width:1px;height:447px;background:#3f3f3f;"></div>
<div class="r" style="left:1905px;top:283px;width:15px;height:447px;background:#242424;"></div>
<div class="r" style="left:1905px;top:565px;width:14px;height:37px;background:#3c3c3c;border-radius:2px;"></div>
<div class="r" style="left:1279px;top:288px;width:10px;height:13px;background:#ffffff;border-radius:1px;"></div>
<div class="t " style="left:1295.50px;top:289.14px;font-size:12.00px;line-height:12.00px;color:#ec2b2b;letter-spacing:-0.112px;">org.openbravo.retail.posterminal.Check...</div>
<div class="t " style="left:1522.00px;top:289.14px;font-size:12.00px;line-height:12.00px;color:#ec2b2b;letter-spacing:-0.770px;">401</div>
<div class="t " style="left:1583.00px;top:289.14px;font-size:12.00px;line-height:12.00px;color:#ec2b2b;letter-spacing:-0.260px;">fetch</div>
<div class="t " style="left:1644.00px;top:289.14px;font-size:12.00px;line-height:12.00px;color:#ec2b2b;letter-spacing:-0.488px;text-decoration:underline;">POS2.js:11864</div>
<div class="t " style="left:1749.80px;top:289.14px;font-size:12.00px;line-height:12.00px;color:#ec2b2b;letter-spacing:-0.720px;">343 B</div>
<div class="t " style="left:1789.00px;top:289.14px;font-size:12.00px;line-height:12.00px;color:#ec2b2b;letter-spacing:-0.835px;">12...</div>
<div class="r" style="left:1843px;top:289px;width:2.3px;height:11px;background:#0fa8e8;"></div>
<div class="r" style="left:1279px;top:309px;width:10px;height:13px;background:#ffffff;border-radius:1px;"></div>
<div class="t " style="left:1295.50px;top:310.14px;font-size:12.00px;line-height:12.00px;color:#ec2b2b;letter-spacing:-0.112px;">org.openbravo.retail.posterminal.Check...</div>
<div class="t " style="left:1522.00px;top:310.14px;font-size:12.00px;line-height:12.00px;color:#ec2b2b;letter-spacing:-0.770px;">401</div>
<div class="t " style="left:1583.00px;top:310.14px;font-size:12.00px;line-height:12.00px;color:#ec2b2b;letter-spacing:-0.260px;">fetch</div>
<div class="t " style="left:1644.00px;top:310.14px;font-size:12.00px;line-height:12.00px;color:#ec2b2b;letter-spacing:-0.488px;text-decoration:underline;">POS2.js:11864</div>
<div class="t " style="left:1749.80px;top:310.14px;font-size:12.00px;line-height:12.00px;color:#ec2b2b;letter-spacing:-0.720px;">343 B</div>
<div class="t " style="left:1789.00px;top:310.14px;font-size:12.00px;line-height:12.00px;color:#ec2b2b;letter-spacing:-0.610px;">11...</div>
<div class="r" style="left:1845px;top:310px;width:2.3px;height:11px;background:#0fa8e8;"></div>
<div class="r" style="left:1279px;top:330px;width:10px;height:13px;background:#ffffff;border-radius:1px;"></div>
<div class="t " style="left:1295.50px;top:331.14px;font-size:12.00px;line-height:12.00px;color:#ec2b2b;letter-spacing:-0.112px;">org.openbravo.retail.posterminal.Check...</div>
<div class="t " style="left:1522.00px;top:331.14px;font-size:12.00px;line-height:12.00px;color:#ec2b2b;letter-spacing:-0.770px;">401</div>
<div class="t " style="left:1583.00px;top:331.14px;font-size:12.00px;line-height:12.00px;color:#ec2b2b;letter-spacing:-0.260px;">fetch</div>
<div class="t " style="left:1644.00px;top:331.14px;font-size:12.00px;line-height:12.00px;color:#ec2b2b;letter-spacing:-0.488px;text-decoration:underline;">POS2.js:11864</div>
<div class="t " style="left:1749.80px;top:331.14px;font-size:12.00px;line-height:12.00px;color:#ec2b2b;letter-spacing:-0.720px;">343 B</div>
<div class="t " style="left:1789.00px;top:331.14px;font-size:12.00px;line-height:12.00px;color:#ec2b2b;letter-spacing:-0.835px;">13...</div>
<div class="r" style="left:1845px;top:331px;width:2.3px;height:11px;background:#0fa8e8;"></div>
<div class="r" style="left:1279px;top:351px;width:10px;height:13px;background:#ffffff;border-radius:1px;"></div>
<div class="t " style="left:1295.50px;top:352.14px;font-size:12.00px;line-height:12.00px;color:#ec2b2b;letter-spacing:-0.112px;">org.openbravo.retail.posterminal.Check...</div>
<div class="t " style="left:1522.00px;top:352.14px;font-size:12.00px;line-height:12.00px;color:#ec2b2b;letter-spacing:-0.770px;">401</div>
<div class="t " style="left:1583.00px;top:352.14px;font-size:12.00px;line-height:12.00px;color:#ec2b2b;letter-spacing:-0.260px;">fetch</div>
<div class="t " style="left:1644.00px;top:352.14px;font-size:12.00px;line-height:12.00px;color:#ec2b2b;letter-spacing:-0.488px;text-decoration:underline;">POS2.js:11864</div>
<div class="t " style="left:1749.80px;top:352.14px;font-size:12.00px;line-height:12.00px;color:#ec2b2b;letter-spacing:-0.720px;">343 B</div>
<div class="t " style="left:1789.00px;top:352.14px;font-size:12.00px;line-height:12.00px;color:#ec2b2b;letter-spacing:-0.835px;">13...</div>
<div class="r" style="left:1845px;top:352px;width:2.3px;height:11px;background:#0fa8e8;"></div>
<div class="r" style="left:1279px;top:372px;width:10px;height:13px;background:#ffffff;border-radius:1px;"></div>
<div class="t " style="left:1295.50px;top:373.14px;font-size:12.00px;line-height:12.00px;color:#ec2b2b;letter-spacing:-0.112px;">org.openbravo.retail.posterminal.Check...</div>
<div class="t " style="left:1522.00px;top:373.14px;font-size:12.00px;line-height:12.00px;color:#ec2b2b;letter-spacing:-0.770px;">401</div>
<div class="t " style="left:1583.00px;top:373.14px;font-size:12.00px;line-height:12.00px;color:#ec2b2b;letter-spacing:-0.260px;">fetch</div>
<div class="t " style="left:1644.00px;top:373.14px;font-size:12.00px;line-height:12.00px;color:#ec2b2b;letter-spacing:-0.488px;text-decoration:underline;">POS2.js:11864</div>
<div class="t " style="left:1749.80px;top:373.14px;font-size:12.00px;line-height:12.00px;color:#ec2b2b;letter-spacing:-0.720px;">343 B</div>
<div class="t " style="left:1789.00px;top:373.14px;font-size:12.00px;line-height:12.00px;color:#ec2b2b;letter-spacing:-0.835px;">13...</div>
<div class="r" style="left:1845px;top:373px;width:2.3px;height:11px;background:#0fa8e8;"></div>
<div class="r" style="left:1279px;top:393px;width:10px;height:13px;background:#ffffff;border-radius:1px;"></div>
<div class="t " style="left:1295.50px;top:394.14px;font-size:12.00px;line-height:12.00px;color:#ec2b2b;letter-spacing:-0.112px;">org.openbravo.retail.posterminal.Check...</div>
<div class="t " style="left:1522.00px;top:394.14px;font-size:12.00px;line-height:12.00px;color:#ec2b2b;letter-spacing:-0.770px;">401</div>
<div class="t " style="left:1583.00px;top:394.14px;font-size:12.00px;line-height:12.00px;color:#ec2b2b;letter-spacing:-0.260px;">fetch</div>
<div class="t " style="left:1644.00px;top:394.14px;font-size:12.00px;line-height:12.00px;color:#ec2b2b;letter-spacing:-0.488px;text-decoration:underline;">POS2.js:11864</div>
<div class="t " style="left:1749.80px;top:394.14px;font-size:12.00px;line-height:12.00px;color:#ec2b2b;letter-spacing:-0.720px;">343 B</div>
<div class="t " style="left:1789.00px;top:394.14px;font-size:12.00px;line-height:12.00px;color:#ec2b2b;letter-spacing:-0.835px;">12...</div>
<div class="r" style="left:1848px;top:394px;width:2.3px;height:11px;background:#0fa8e8;"></div>
<div class="r" style="left:1279px;top:414px;width:10px;height:13px;background:#ffffff;border-radius:1px;"></div>
<div class="t " style="left:1295.50px;top:415.14px;font-size:12.00px;line-height:12.00px;color:#ec2b2b;letter-spacing:-0.112px;">org.openbravo.retail.posterminal.Check...</div>
<div class="t " style="left:1522.00px;top:415.14px;font-size:12.00px;line-height:12.00px;color:#ec2b2b;letter-spacing:-0.770px;">401</div>
<div class="t " style="left:1583.00px;top:415.14px;font-size:12.00px;line-height:12.00px;color:#ec2b2b;letter-spacing:-0.260px;">fetch</div>
<div class="t " style="left:1644.00px;top:415.14px;font-size:12.00px;line-height:12.00px;color:#ec2b2b;letter-spacing:-0.488px;text-decoration:underline;">POS2.js:11864</div>
<div class="t " style="left:1749.80px;top:415.14px;font-size:12.00px;line-height:12.00px;color:#ec2b2b;letter-spacing:-0.720px;">343 B</div>
<div class="t " style="left:1789.00px;top:415.14px;font-size:12.00px;line-height:12.00px;color:#ec2b2b;letter-spacing:-0.835px;">13...</div>
<div class="r" style="left:1848px;top:415px;width:2.3px;height:11px;background:#0fa8e8;"></div>
<div class="r" style="left:1279px;top:435px;width:10px;height:13px;background:#ffffff;border-radius:1px;"></div>
<div class="t " style="left:1295.50px;top:436.14px;font-size:12.00px;line-height:12.00px;color:#ec2b2b;letter-spacing:-0.112px;">org.openbravo.retail.posterminal.Check...</div>
<div class="t " style="left:1522.00px;top:436.14px;font-size:12.00px;line-height:12.00px;color:#ec2b2b;letter-spacing:-0.770px;">401</div>
<div class="t " style="left:1583.00px;top:436.14px;font-size:12.00px;line-height:12.00px;color:#ec2b2b;letter-spacing:-0.260px;">fetch</div>
<div class="t " style="left:1644.00px;top:436.14px;font-size:12.00px;line-height:12.00px;color:#ec2b2b;letter-spacing:-0.488px;text-decoration:underline;">POS2.js:11864</div>
<div class="t " style="left:1749.80px;top:436.14px;font-size:12.00px;line-height:12.00px;color:#ec2b2b;letter-spacing:-0.720px;">343 B</div>
<div class="t " style="left:1789.00px;top:436.14px;font-size:12.00px;line-height:12.00px;color:#ec2b2b;letter-spacing:-0.835px;">13...</div>
<div class="r" style="left:1848px;top:436px;width:2.3px;height:11px;background:#0fa8e8;"></div>
<div class="r" style="left:1279px;top:456px;width:10px;height:13px;background:#ffffff;border-radius:1px;"></div>
<div class="t " style="left:1295.50px;top:457.14px;font-size:12.00px;line-height:12.00px;color:#ec2b2b;letter-spacing:-0.112px;">org.openbravo.retail.posterminal.Check...</div>
<div class="t " style="left:1522.00px;top:457.14px;font-size:12.00px;line-height:12.00px;color:#ec2b2b;letter-spacing:-0.770px;">401</div>
<div class="t " style="left:1583.00px;top:457.14px;font-size:12.00px;line-height:12.00px;color:#ec2b2b;letter-spacing:-0.260px;">fetch</div>
<div class="t " style="left:1644.00px;top:457.14px;font-size:12.00px;line-height:12.00px;color:#ec2b2b;letter-spacing:-0.488px;text-decoration:underline;">POS2.js:11864</div>
<div class="t " style="left:1749.80px;top:457.14px;font-size:12.00px;line-height:12.00px;color:#ec2b2b;letter-spacing:-0.720px;">343 B</div>
<div class="t " style="left:1789.00px;top:457.14px;font-size:12.00px;line-height:12.00px;color:#ec2b2b;letter-spacing:-0.835px;">14...</div>
<div class="r" style="left:1848px;top:457px;width:2.3px;height:11px;background:#0fa8e8;"></div>
<div class="r" style="left:1279px;top:477px;width:10px;height:13px;background:#ffffff;border-radius:1px;"></div>
<div class="t " style="left:1295.50px;top:478.14px;font-size:12.00px;line-height:12.00px;color:#ec2b2b;letter-spacing:-0.112px;">org.openbravo.retail.posterminal.Check...</div>
<div class="t " style="left:1522.00px;top:478.14px;font-size:12.00px;line-height:12.00px;color:#ec2b2b;letter-spacing:-0.770px;">401</div>
<div class="t " style="left:1583.00px;top:478.14px;font-size:12.00px;line-height:12.00px;color:#ec2b2b;letter-spacing:-0.260px;">fetch</div>
<div class="t " style="left:1644.00px;top:478.14px;font-size:12.00px;line-height:12.00px;color:#ec2b2b;letter-spacing:-0.488px;text-decoration:underline;">POS2.js:11864</div>
<div class="t " style="left:1749.80px;top:478.14px;font-size:12.00px;line-height:12.00px;color:#ec2b2b;letter-spacing:-0.720px;">343 B</div>
<div class="t " style="left:1789.00px;top:478.14px;font-size:12.00px;line-height:12.00px;color:#ec2b2b;letter-spacing:-0.835px;">13...</div>
<div class="r" style="left:1851px;top:478px;width:2.3px;height:11px;background:#0fa8e8;"></div>
<div class="r" style="left:1279px;top:498px;width:10px;height:13px;background:#ffffff;border-radius:1px;"></div>
<div class="t " style="left:1295.50px;top:499.14px;font-size:12.00px;line-height:12.00px;color:#ec2b2b;letter-spacing:-0.112px;">org.openbravo.retail.posterminal.Check...</div>
<div class="t " style="left:1522.00px;top:499.14px;font-size:12.00px;line-height:12.00px;color:#ec2b2b;letter-spacing:-0.770px;">401</div>
<div class="t " style="left:1583.00px;top:499.14px;font-size:12.00px;line-height:12.00px;color:#ec2b2b;letter-spacing:-0.260px;">fetch</div>
<div class="t " style="left:1644.00px;top:499.14px;font-size:12.00px;line-height:12.00px;color:#ec2b2b;letter-spacing:-0.488px;text-decoration:underline;">POS2.js:11864</div>
<div class="t " style="left:1749.80px;top:499.14px;font-size:12.00px;line-height:12.00px;color:#ec2b2b;letter-spacing:-0.720px;">343 B</div>
<div class="t " style="left:1789.00px;top:499.14px;font-size:12.00px;line-height:12.00px;color:#ec2b2b;letter-spacing:-0.835px;">14...</div>
<div class="r" style="left:1851px;top:499px;width:2.3px;height:11px;background:#0fa8e8;"></div>
<div class="r" style="left:1279px;top:519px;width:10px;height:13px;background:#ffffff;border-radius:1px;"></div>
<div class="t " style="left:1295.50px;top:520.14px;font-size:12.00px;line-height:12.00px;color:#ec2b2b;letter-spacing:-0.112px;">org.openbravo.retail.posterminal.Check...</div>
<div class="t " style="left:1522.00px;top:520.14px;font-size:12.00px;line-height:12.00px;color:#ec2b2b;letter-spacing:-0.770px;">401</div>
<div class="t " style="left:1583.00px;top:520.14px;font-size:12.00px;line-height:12.00px;color:#ec2b2b;letter-spacing:-0.260px;">fetch</div>
<div class="t " style="left:1644.00px;top:520.14px;font-size:12.00px;line-height:12.00px;color:#ec2b2b;letter-spacing:-0.488px;text-decoration:underline;">POS2.js:11864</div>
<div class="t " style="left:1749.80px;top:520.14px;font-size:12.00px;line-height:12.00px;color:#ec2b2b;letter-spacing:-0.720px;">343 B</div>
<div class="t " style="left:1789.00px;top:520.14px;font-size:12.00px;line-height:12.00px;color:#ec2b2b;letter-spacing:-0.835px;">17...</div>
<div class="r" style="left:1851px;top:520px;width:2.3px;height:11px;background:#0fa8e8;"></div>
<div class="r" style="left:1279px;top:540px;width:10px;height:13px;background:#ffffff;border-radius:1px;"></div>
<div class="t " style="left:1295.50px;top:541.14px;font-size:12.00px;line-height:12.00px;color:#ec2b2b;letter-spacing:-0.112px;">org.openbravo.retail.posterminal.Check...</div>
<div class="t " style="left:1522.00px;top:541.14px;font-size:12.00px;line-height:12.00px;color:#ec2b2b;letter-spacing:-0.770px;">401</div>
<div class="t " style="left:1583.00px;top:541.14px;font-size:12.00px;line-height:12.00px;color:#ec2b2b;letter-spacing:-0.260px;">fetch</div>
<div class="t " style="left:1644.00px;top:541.14px;font-size:12.00px;line-height:12.00px;color:#ec2b2b;letter-spacing:-0.488px;text-decoration:underline;">POS2.js:11864</div>
<div class="t " style="left:1749.80px;top:541.14px;font-size:12.00px;line-height:12.00px;color:#ec2b2b;letter-spacing:-0.720px;">343 B</div>
<div class="t " style="left:1789.00px;top:541.14px;font-size:12.00px;line-height:12.00px;color:#ec2b2b;letter-spacing:-0.835px;">17...</div>
<div class="r" style="left:1851px;top:541px;width:2.3px;height:11px;background:#0fa8e8;"></div>
<div class="r" style="left:1279px;top:561px;width:10px;height:13px;background:#ffffff;border-radius:1px;"></div>
<div class="t " style="left:1295.50px;top:562.14px;font-size:12.00px;line-height:12.00px;color:#ec2b2b;letter-spacing:-0.112px;">org.openbravo.retail.posterminal.Check...</div>
<div class="t " style="left:1522.00px;top:562.14px;font-size:12.00px;line-height:12.00px;color:#ec2b2b;letter-spacing:-0.770px;">401</div>
<div class="t " style="left:1583.00px;top:562.14px;font-size:12.00px;line-height:12.00px;color:#ec2b2b;letter-spacing:-0.260px;">fetch</div>
<div class="t " style="left:1644.00px;top:562.14px;font-size:12.00px;line-height:12.00px;color:#ec2b2b;letter-spacing:-0.488px;text-decoration:underline;">POS2.js:11864</div>
<div class="t " style="left:1749.80px;top:562.14px;font-size:12.00px;line-height:12.00px;color:#ec2b2b;letter-spacing:-0.720px;">343 B</div>
<div class="t " style="left:1789.00px;top:562.14px;font-size:12.00px;line-height:12.00px;color:#ec2b2b;letter-spacing:-0.610px;">11...</div>
<div class="r" style="left:1854px;top:562px;width:2.3px;height:11px;background:#0fa8e8;"></div>
<div class="r" style="left:1279px;top:582px;width:10px;height:13px;background:#ffffff;border-radius:1px;"></div>
<div class="t " style="left:1295.50px;top:583.14px;font-size:12.00px;line-height:12.00px;color:#ec2b2b;letter-spacing:-0.112px;">org.openbravo.retail.posterminal.Check...</div>
<div class="t " style="left:1522.00px;top:583.14px;font-size:12.00px;line-height:12.00px;color:#ec2b2b;letter-spacing:-0.770px;">401</div>
<div class="t " style="left:1583.00px;top:583.14px;font-size:12.00px;line-height:12.00px;color:#ec2b2b;letter-spacing:-0.260px;">fetch</div>
<div class="t " style="left:1644.00px;top:583.14px;font-size:12.00px;line-height:12.00px;color:#ec2b2b;letter-spacing:-0.488px;text-decoration:underline;">POS2.js:11864</div>
<div class="t " style="left:1749.80px;top:583.14px;font-size:12.00px;line-height:12.00px;color:#ec2b2b;letter-spacing:-0.720px;">343 B</div>
<div class="t " style="left:1789.00px;top:583.14px;font-size:12.00px;line-height:12.00px;color:#ec2b2b;letter-spacing:-0.835px;">12...</div>
<div class="r" style="left:1854px;top:583px;width:2.3px;height:11px;background:#0fa8e8;"></div>
<div class="r" style="left:1279px;top:603px;width:10px;height:13px;background:#ffffff;border-radius:1px;"></div>
<div class="t " style="left:1295.50px;top:604.14px;font-size:12.00px;line-height:12.00px;color:#ec2b2b;letter-spacing:-0.112px;">org.openbravo.retail.posterminal.Check...</div>
<div class="t " style="left:1522.00px;top:604.14px;font-size:12.00px;line-height:12.00px;color:#ec2b2b;letter-spacing:-0.770px;">401</div>
<div class="t " style="left:1583.00px;top:604.14px;font-size:12.00px;line-height:12.00px;color:#ec2b2b;letter-spacing:-0.260px;">fetch</div>
<div class="t " style="left:1644.00px;top:604.14px;font-size:12.00px;line-height:12.00px;color:#ec2b2b;letter-spacing:-0.488px;text-decoration:underline;">POS2.js:11864</div>
<div class="t " style="left:1749.80px;top:604.14px;font-size:12.00px;line-height:12.00px;color:#ec2b2b;letter-spacing:-0.720px;">343 B</div>
<div class="t " style="left:1789.00px;top:604.14px;font-size:12.00px;line-height:12.00px;color:#ec2b2b;letter-spacing:-0.835px;">12...</div>
<div class="r" style="left:1854px;top:604px;width:2.3px;height:11px;background:#0fa8e8;"></div>
<div class="r" style="left:1279px;top:624px;width:10px;height:13px;background:#ffffff;border-radius:1px;"></div>
<div class="t " style="left:1295.50px;top:625.14px;font-size:12.00px;line-height:12.00px;color:#ec2b2b;letter-spacing:-0.112px;">org.openbravo.retail.posterminal.Check...</div>
<div class="t " style="left:1522.00px;top:625.14px;font-size:12.00px;line-height:12.00px;color:#ec2b2b;letter-spacing:-0.770px;">401</div>
<div class="t " style="left:1583.00px;top:625.14px;font-size:12.00px;line-height:12.00px;color:#ec2b2b;letter-spacing:-0.260px;">fetch</div>
<div class="t " style="left:1644.00px;top:625.14px;font-size:12.00px;line-height:12.00px;color:#ec2b2b;letter-spacing:-0.488px;text-decoration:underline;">POS2.js:11864</div>
<div class="t " style="left:1749.80px;top:625.14px;font-size:12.00px;line-height:12.00px;color:#ec2b2b;letter-spacing:-0.720px;">343 B</div>
<div class="t " style="left:1789.00px;top:625.14px;font-size:12.00px;line-height:12.00px;color:#ec2b2b;letter-spacing:-0.835px;">12...</div>
<div class="r" style="left:1854px;top:625px;width:2.3px;height:11px;background:#0fa8e8;"></div>
<div class="r" style="left:1279px;top:645px;width:10px;height:13px;background:#ffffff;border-radius:1px;"></div>
<div class="t " style="left:1295.50px;top:646.14px;font-size:12.00px;line-height:12.00px;color:#ec2b2b;letter-spacing:-0.112px;">org.openbravo.retail.posterminal.Check...</div>
<div class="t " style="left:1522.00px;top:646.14px;font-size:12.00px;line-height:12.00px;color:#ec2b2b;letter-spacing:-0.770px;">401</div>
<div class="t " style="left:1583.00px;top:646.14px;font-size:12.00px;line-height:12.00px;color:#ec2b2b;letter-spacing:-0.260px;">fetch</div>
<div class="t " style="left:1644.00px;top:646.14px;font-size:12.00px;line-height:12.00px;color:#ec2b2b;letter-spacing:-0.488px;text-decoration:underline;">POS2.js:11864</div>
<div class="t " style="left:1749.80px;top:646.14px;font-size:12.00px;line-height:12.00px;color:#ec2b2b;letter-spacing:-0.720px;">343 B</div>
<div class="t " style="left:1789.00px;top:646.14px;font-size:12.00px;line-height:12.00px;color:#ec2b2b;letter-spacing:-0.835px;">10...</div>
<div class="r" style="left:1856px;top:646px;width:2.3px;height:11px;background:#0fa8e8;"></div>
<div class="r" style="left:1279px;top:666px;width:10px;height:13px;background:#ffffff;border-radius:1px;"></div>
<div class="t " style="left:1295.50px;top:667.14px;font-size:12.00px;line-height:12.00px;color:#ec2b2b;letter-spacing:-0.112px;">org.openbravo.retail.posterminal.Check...</div>
<div class="t " style="left:1522.00px;top:667.14px;font-size:12.00px;line-height:12.00px;color:#ec2b2b;letter-spacing:-0.770px;">401</div>
<div class="t " style="left:1583.00px;top:667.14px;font-size:12.00px;line-height:12.00px;color:#ec2b2b;letter-spacing:-0.260px;">fetch</div>
<div class="t " style="left:1644.00px;top:667.14px;font-size:12.00px;line-height:12.00px;color:#ec2b2b;letter-spacing:-0.488px;text-decoration:underline;">POS2.js:11864</div>
<div class="t " style="left:1749.80px;top:667.14px;font-size:12.00px;line-height:12.00px;color:#ec2b2b;letter-spacing:-0.720px;">343 B</div>
<div class="t " style="left:1789.00px;top:667.14px;font-size:12.00px;line-height:12.00px;color:#ec2b2b;letter-spacing:-0.610px;">11...</div>
<div class="r" style="left:1856px;top:667px;width:2.3px;height:11px;background:#0fa8e8;"></div>
<div class="r" style="left:1279px;top:687px;width:10px;height:13px;background:#ffffff;border-radius:1px;"></div>
<div class="t " style="left:1295.50px;top:688.14px;font-size:12.00px;line-height:12.00px;color:#ec2b2b;letter-spacing:-0.112px;">org.openbravo.retail.posterminal.Check...</div>
<div class="t " style="left:1522.00px;top:688.14px;font-size:12.00px;line-height:12.00px;color:#ec2b2b;letter-spacing:-0.770px;">401</div>
<div class="t " style="left:1583.00px;top:688.14px;font-size:12.00px;line-height:12.00px;color:#ec2b2b;letter-spacing:-0.260px;">fetch</div>
<div class="t " style="left:1644.00px;top:688.14px;font-size:12.00px;line-height:12.00px;color:#ec2b2b;letter-spacing:-0.488px;text-decoration:underline;">POS2.js:11864</div>
<div class="t " style="left:1749.80px;top:688.14px;font-size:12.00px;line-height:12.00px;color:#ec2b2b;letter-spacing:-0.720px;">343 B</div>
<div class="t " style="left:1789.00px;top:688.14px;font-size:12.00px;line-height:12.00px;color:#ec2b2b;letter-spacing:-0.610px;">11...</div>
<div class="r" style="left:1856px;top:688px;width:2.3px;height:11px;background:#0fa8e8;"></div>
<div class="r" style="left:1279px;top:708px;width:10px;height:13px;background:#ffffff;border-radius:1px;"></div>
<div class="t " style="left:1295.50px;top:709.14px;font-size:12.00px;line-height:12.00px;color:#ec2b2b;letter-spacing:-0.112px;">org.openbravo.retail.posterminal.Check...</div>
<div class="t " style="left:1522.00px;top:709.14px;font-size:12.00px;line-height:12.00px;color:#ec2b2b;letter-spacing:-0.770px;">401</div>
<div class="t " style="left:1583.00px;top:709.14px;font-size:12.00px;line-height:12.00px;color:#ec2b2b;letter-spacing:-0.260px;">fetch</div>
<div class="t " style="left:1644.00px;top:709.14px;font-size:12.00px;line-height:12.00px;color:#ec2b2b;letter-spacing:-0.488px;text-decoration:underline;">POS2.js:11864</div>
<div class="t " style="left:1749.80px;top:709.14px;font-size:12.00px;line-height:12.00px;color:#ec2b2b;letter-spacing:-0.720px;">343 B</div>
<div class="t " style="left:1789.00px;top:709.14px;font-size:12.00px;line-height:12.00px;color:#ec2b2b;letter-spacing:-0.835px;">12...</div>
<div class="r" style="left:1856px;top:709px;width:2.3px;height:11px;background:#0fa8e8;"></div>
<div class="r" style="left:1279px;top:729px;width:10px;height:1.5px;background:#ffffff;"></div>
<div class="r" style="left:1842px;top:290px;width:1.5px;height:8px;background:#9a9a9a;"></div>
<div class="r" style="left:1271px;top:730px;width:649px;height:1px;background:#3f3f3f;"></div>
<div class="r" style="left:1271px;top:731px;width:649px;height:27px;background:#292a2d;"></div>
<div class="t " style="left:1282.00px;top:738.84px;font-size:12.00px;line-height:12.00px;color:#bdbdbd;letter-spacing:-0.215px;">258 requests</div>
<div class="r" style="left:1359px;top:737px;width:1px;height:15px;background:#3f3f3f;"></div>
<div class="t " style="left:1368.50px;top:738.84px;font-size:12.00px;line-height:12.00px;color:#bdbdbd;letter-spacing:-0.129px;">268 kB transferred</div>
<div class="r" style="left:1474px;top:737px;width:1px;height:15px;background:#3f3f3f;"></div>
<div class="t " style="left:1484.00px;top:738.84px;font-size:12.00px;line-height:12.00px;color:#bdbdbd;letter-spacing:-0.257px;">777 kB resources</div>
<div class="r" style="left:1271px;top:758px;width:649px;height:1px;background:#4a4a4a;"></div>
<div class="r" style="left:1271px;top:759px;width:649px;height:26px;background:#292a2d;"></div>
<div class="r" style="left:1271px;top:785px;width:649px;height:1px;background:#3f3f3f;"></div>
<svg class="r" style="left:1285px;top:765px;" width="5" height="16" viewBox="0 0 5 16"><circle cx="2.5" cy="2.8" r="1.6" fill="#a0a0a0"/><circle cx="2.5" cy="7.7" r="1.6" fill="#a0a0a0"/><circle cx="2.5" cy="12.6" r="1.6" fill="#a0a0a0"/></svg>
<div class="t " style="left:1308.50px;top:766.84px;font-size:12.00px;line-height:12.00px;color:#bdbdbd;letter-spacing:-0.257px;">Console</div>
<div class="t " style="left:1370.50px;top:766.84px;font-size:12.00px;line-height:12.00px;color:#bdbdbd;letter-spacing:-0.018px;">What&#x27;s New</div>
<div class="r" style="left:1453px;top:759px;width:64px;height:26px;background:#000000;"></div>
<div class="t " style="left:1462.50px;top:766.84px;font-size:12.00px;line-height:12.00px;color:#ffffff;letter-spacing:-0.708px;">Search</div>
<svg class="r" style="left:1504px;top:767px;" width="8" height="8" viewBox="0 0 8 8"><path d="M1 1L7 7M7 1L1 7" stroke="#a8a8a8" stroke-width="1"/></svg>
<div class="t " style="left:1526.00px;top:766.84px;font-size:12.00px;line-height:12.00px;color:#bdbdbd;letter-spacing:-0.536px;">Issues</div>
<svg class="r" style="left:1899px;top:767px;" width="11" height="11" viewBox="0 0 11 11"><path d="M0.8 0.8L10.2 10.2M10.2 0.8L0.8 10.2" stroke="#a0a0a0" stroke-width="1.4"/></svg>
<div class="r" style="left:1271px;top:786px;width:649px;height:26px;background:#292a2d;"></div>
<div class="r" style="left:1271px;top:812px;width:649px;height:1px;background:#3f3f3f;"></div>
<div class="t " style="left:1279.50px;top:793.33px;font-size:12.60px;line-height:12.60px;color:#c0c0c0;font-weight:bold;letter-spacing:-1.691px;">Aa</div>
<div class="t " style="left:1310.50px;top:793.33px;font-size:12.60px;line-height:12.60px;color:#c0c0c0;font-weight:bold;letter-spacing:1.058px;">.*</div>
<div class="r" style="left:1328px;top:788px;width:283px;height:22px;background:#202020;border:1px solid #1f6fc0;box-sizing:border-box;"></div>
<div class="t " style="left:1331.00px;top:793.84px;font-size:12.00px;line-height:12.00px;color:#d4d4d4;letter-spacing:0.012px;">callDigiboard</div>
<svg class="r" style="left:1635px;top:792px;" width="15" height="15" viewBox="0 0 15 15"><path d="M12.3 8.5A5 5 0 1 1 10.8 4" fill="none" stroke="#a0a0a0" stroke-width="1.8"/><path d="M9 1.5H13.5V6Z" fill="#a0a0a0"/></svg>
<svg class="r" style="left:1664px;top:792px;" width="15" height="15" viewBox="0 0 15 15"><circle cx="7.5" cy="7.5" r="5.8" fill="none" stroke="#a0a0a0" stroke-width="1.8"/><path d="M3.5 3.5L11.5 11.5" stroke="#a0a0a0" stroke-width="1.8"/></svg>
<div class="r" style="left:1271px;top:813px;width:649px;height:208px;background:#242424;"></div>
<div class="r" style="left:1271px;top:1021px;width:649px;height:1px;background:#3f3f3f;"></div>
<div class="r" style="left:1271px;top:1022px;width:649px;height:18px;background:#2b2b2b;"></div>
</body></html>
